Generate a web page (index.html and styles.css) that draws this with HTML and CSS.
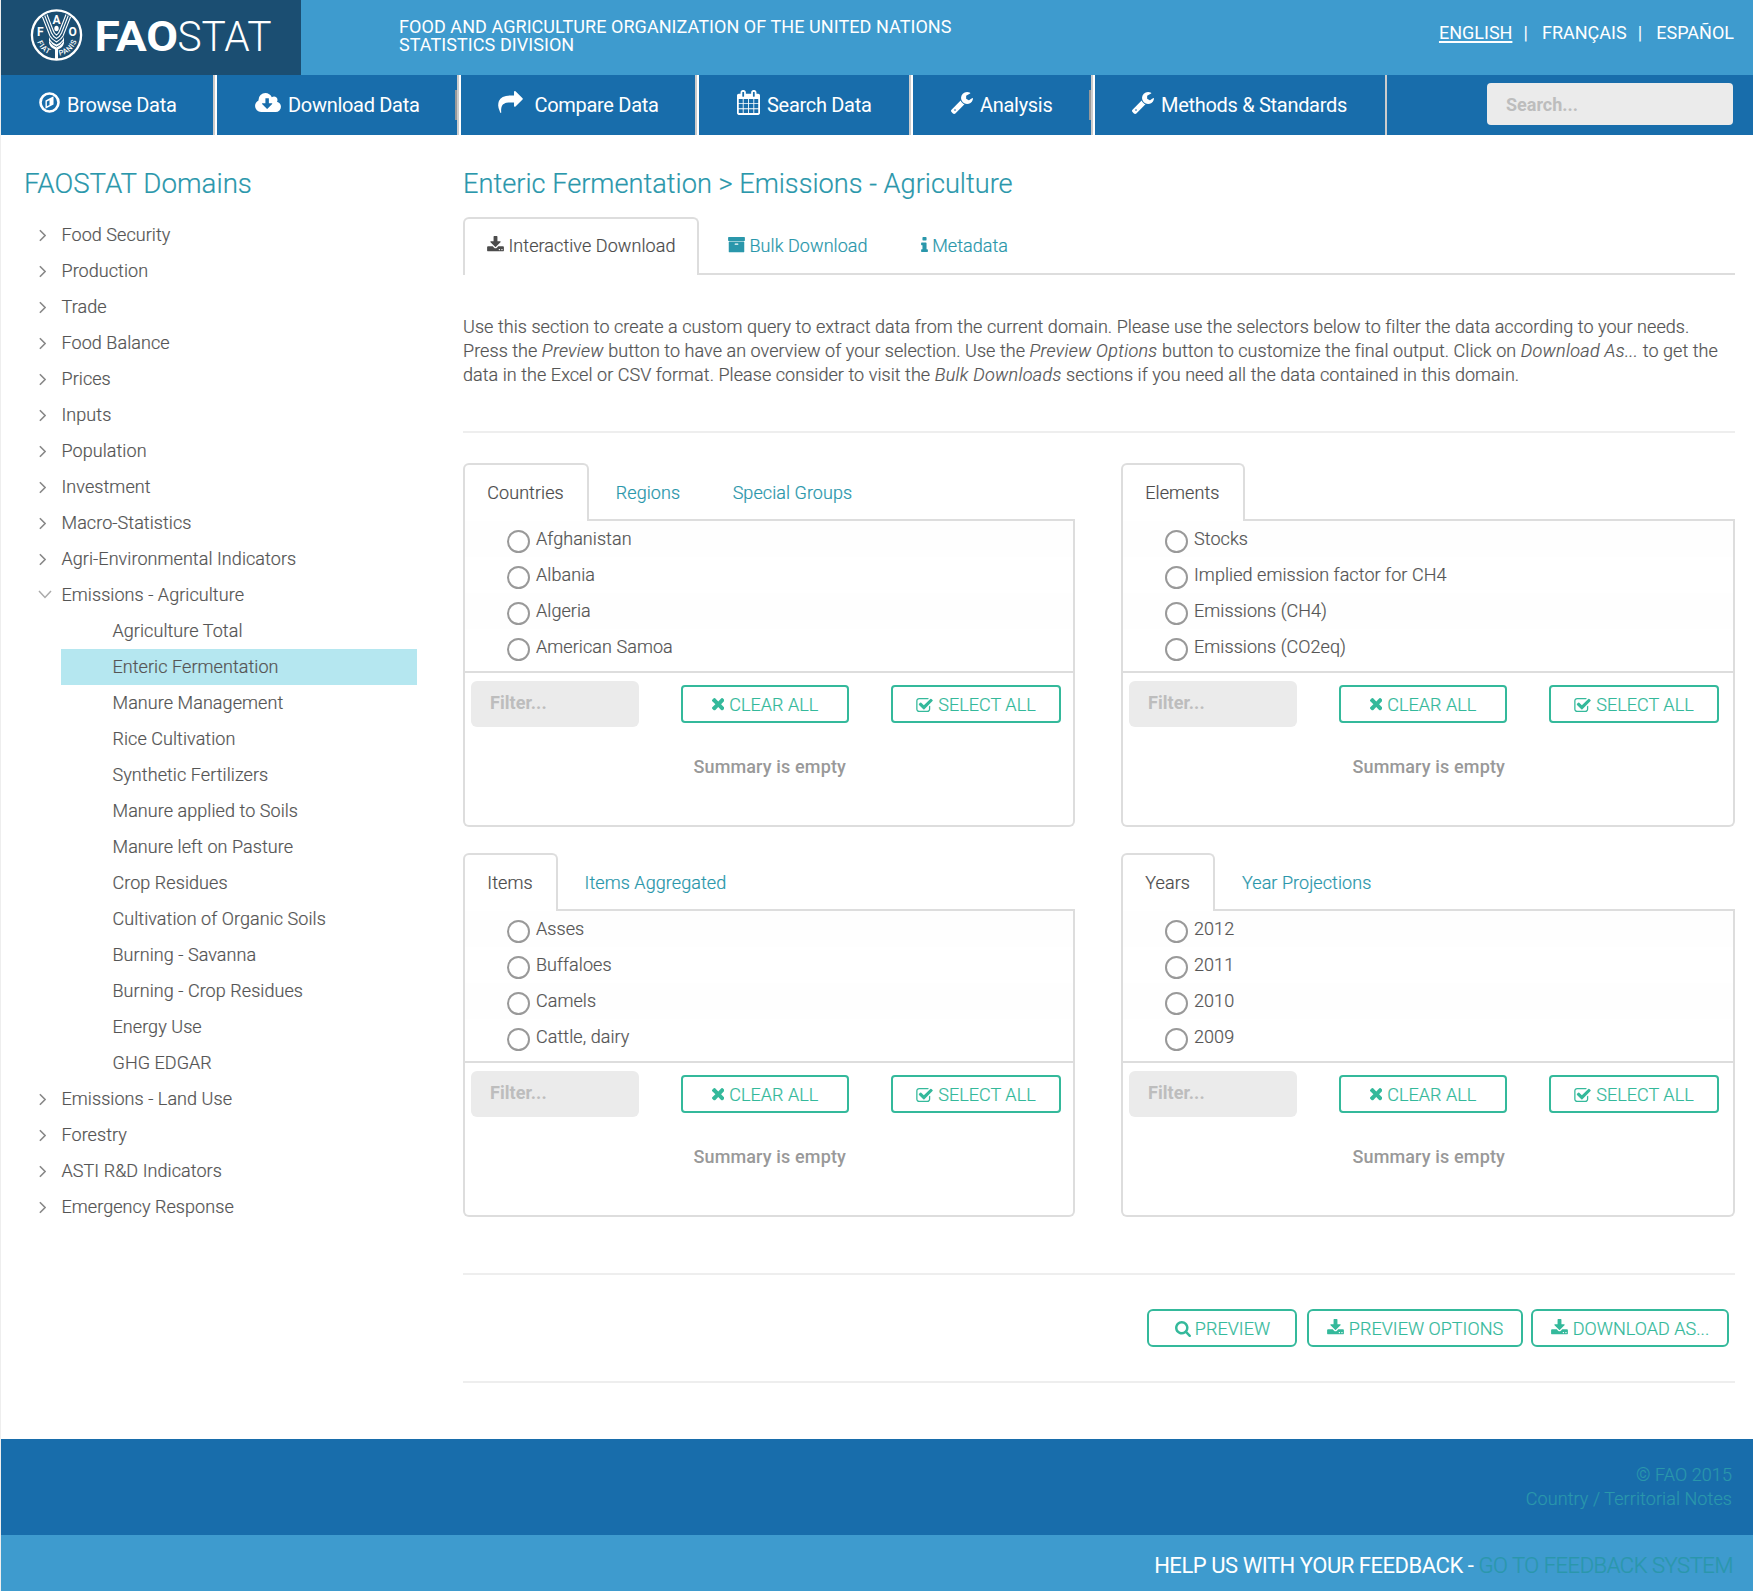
FILE: index.html
```html
<!DOCTYPE html>
<html lang="en">
<head>
<meta charset="utf-8">
<title>FAOSTAT</title>
<link rel="stylesheet" href="styles.css">
</head>
<body>
<svg class="sprite" aria-hidden="true">
  <symbol id="i-download" viewBox="64 0 1664 1536"><path d="M1344 1344q0-26-19-45t-45-19-45 19-19 45 19 45 45 19 45-19 19-45zm256 0q0-26-19-45t-45-19-45 19-19 45 19 45 45 19 45-19 19-45zm128-224v320q0 40-28 68t-68 28h-1472q-40 0-68-28t-28-68v-320q0-40 28-68t68-28h465l135 136q58 56 136 56t136-56l136-136h464q40 0 68 28t28 68zm-325-569q17 41-14 70l-448 448q-18 19-45 19t-45-19l-448-448q-31-29-14-70 17-39 59-39h256v-448q0-26 19-45t45-19h256q26 0 45 19t19 45v448h256q42 0 59 39z"/></symbol>
  <symbol id="i-search" viewBox="64 128 1664 1664"><path d="M1216 832q0-185-131.5-316.5t-316.5-131.5-316.5 131.5-131.5 316.5 131.5 316.5 316.5 131.5 316.5-131.5 131.5-316.5zm512 832q0 52-38 90t-90 38q-54 0-90-38l-343-342q-179 124-399 124-143 0-273.5-55.5t-225-150-150-225-55.5-273.5 55.5-273.5 150-225 225-150 273.5-55.5 273.5 55.5 225 150 150 225 55.5 273.5q0 220-124 399l343 343q37 37 37 90z"/></symbol>
  <symbol id="i-times" viewBox="302 366 1188 1188"><path d="M1490 1322q0 40-28 68l-136 136q-28 28-68 28t-68-28l-294-294-294 294q-28 28-68 28t-68-28l-136-136q-28-28-28-68t28-68l294-294-294-294q-28-28-28-68t28-68l136-136q28-28 68-28t68 28l294 294 294-294q28-28 68-28t68 28l136 136q28 28 28 68t-28 68l-294 294 294 294q28 28 28 68z"/></symbol>
  <symbol id="i-check" viewBox="64 128 1664 1408"><path d="M1472 930v318q0 119-84.5 203.5t-203.5 84.5h-832q-119 0-203.5-84.5t-84.5-203.5v-832q0-119 84.5-203.5t203.5-84.5h832q63 0 117 25 15 7 18 23 3 17-9 29l-49 49q-10 10-23 10-3 0-9-2-23-6-45-6h-832q-66 0-113 47t-47 113v832q0 66 47 113t113 47h832q66 0 113-47t47-113v-254q0-13 9-22l64-64q10-10 23-10 6 0 12 3 20 8 20 29zm231-489l-814 814q-24 24-57 24t-57-24l-430-430q-24-24-24-57t24-57l110-110q24-24 57-24t57 24l263 263 647-647q24-24 57-24t57 24l110 110q24 24 24 57t-24 57z"/></symbol>
  <symbol id="i-info" viewBox="576 128 640 1408"><path d="M1216 1344v128q0 26-19 45t-45 19h-512q-26 0-45-19t-19-45v-128q0-26 19-45t45-19h64v-384h-64q-26 0-45-19t-19-45v-128q0-26 19-45t45-19h384q26 0 45 19t19 45v576h64q26 0 45 19t19 45zm-128-1152v192q0 26-19 45t-45 19h-256q-26 0-45-19t-19-45v-192q0-26 19-45t45-19h256q26 0 45 19t19 45z"/></symbol>
  <symbol id="i-archive" viewBox="64 128 1664 1536"><path d="M1088 832q0-26-19-45t-45-19h-256q-26 0-45 19t-19 45 19 45 45 19h256q26 0 45-19t19-45zm576-192v960q0 26-19 45t-45 19h-1408q-26 0-45-19t-19-45v-960q0-26 19-45t45-19h1408q26 0 45 19t19 45zm64-448v256q0 26-19 45t-45 19h-1536q-26 0-45-19t-19-45v-256q0-26 19-45t45-19h1536q26 0 45 19t19 45z"/></symbol>
  <symbol id="i-wrench" viewBox="85 128 1642 1643"><path d="M448 1472q0-26-19-45t-45-19-45 19-19 45 19 45 45 19 45-19 19-45zm644-420l-682 682q-37 37-90 37-52 0-91-37l-106-108q-38-36-38-90 0-53 38-91l681-681q39 98 114.5 173.5t173.5 114.5zm634-435q0 39-23 106-47 134-164.5 217.5t-258.5 83.5q-185 0-316.5-131.5t-131.5-316.5 131.5-316.5 316.5-131.5q58 0 121.5 16.5t107.5 46.5q16 11 16 28t-16 28l-293 169v224l193 107q5-3 79-48.5t135.5-81 70.5-35.5q15 0 23.5 10t8.5 25z"/></symbol>
  <symbol id="i-calendar" viewBox="64 0 1664 1792"><path d="M192 1664h288v-288h-288v288zm352 0h320v-288h-320v288zm-352-352h288v-320h-288v320zm352 0h320v-320h-320v320zm-352-384h288v-288h-288v288zm736 736h320v-288h-320v288zm-384-736h320v-288h-320v288zm768 736h288v-288h-288v288zm-384-352h320v-320h-320v320zm-352-864v-288q0-13-9.500-22.500t-22.500-9.500h-64q-13 0-22.500 9.500t-9.500 22.500v288q0 13 9.500 22.500t22.500 9.500h64q13 0 22.500-9.500t9.500-22.500zm736 864h288v-320h-288v320zm-384-384h320v-288h-320v288zm384 0h288v-288h-288v288zm32-480v-288q0-13-9.500-22.500t-22.500-9.500h-64q-13 0-22.500 9.500t-9.500 22.500v288q0 13 9.500 22.500t22.500 9.500h64q13 0 22.500-9.500t9.500-22.500zm384-64v1280q0 52-38 90t-90 38h-1408q-52 0-90-38t-38-90v-1280q0-52 38-90t90-38h128v-96q0-66 47-113t113-47h64q66 0 113 47t47 113v96h384v-96q0-66 47-113t113-47h64q66 0 113 47t47 113v96h128q52 0 90 38t38 90z"/></symbol>
  <symbol id="i-share" viewBox="0 64 1792 1600"><path d="M1792 640q0 26-19 45l-512 512q-19 19-45 19t-45-19-19-45v-256h-224q-98 0-175.500 6t-154 21.500-133 42.500-105.500 69.500-80 101-48.500 138.500-17.500 181q0 55 5 123 0 6 2.500 23.500t2.500 26.500q0 15-8.500 25t-23.500 10q-16 0-28-17-7-9-13-22t-13.500-30-10.500-24q-127-285-127-451 0-199 53-333 162-403 875-403h224v-256q0-26 19-45t45-19 45 19l512 512q19 19 19 45z"/></symbol>
  <symbol id="i-cloud" viewBox="-64 128 1920 1408"><path d="M1216 928q0-14-9-23t-23-9h-224v-352q0-13-9.500-22.500t-22.500-9.500h-192q-13 0-22.500 9.500t-9.500 22.500v352h-224q-13 0-22.500 9.500t-9.500 22.500q0 14 9 23l352 352q9 9 23 9t23-9l351-351q10-12 10-24zm640 224q0 159-112.500 271.500t-271.500 112.500h-1088q-185 0-316.500-131.500t-131.500-316.500q0-130 70-240t188-165q-2-30-2-43 0-212 150-362t362-150q156 0 285.500 87t188.500 231q71-62 166-62 106 0 181 75t75 181q0 76-41 138 130 31 213.500 135.500t83.500 238.500z"/></symbol>
  <symbol id="i-compass" viewBox="0 0 24 24"><circle cx="12" cy="12" r="10.300" fill="none" stroke="currentColor" stroke-width="3"/><path fill-rule="evenodd" d="M7.400 9.800 16.600 4.900V14.200L7.400 19.100ZM9 10.900V16.400L12 14.800V9.300Z"/></symbol>
  <symbol id="i-right" viewBox="0 0 8 14"><path d="M1 1 7 7 1 13" fill="none" stroke="currentColor" stroke-width="1.900"/></symbol>
  <symbol id="i-down" viewBox="0 0 14 9"><path d="M1 1 7 7.500 13 1" fill="none" stroke="currentColor" stroke-width="1.500"/></symbol>
</svg>

<header class="top">
  <div class="brand">
    <svg class="logo" width="300" height="75" viewBox="1 0 300 75">
      <defs>
        <path id="arc-fiat" d="M36.200 38A20.800 20.800 0 0 0 55 55.800"/>
        <path id="arc-panis" d="M58.500 55.800A20.800 20.800 0 0 0 77.200 38"/>
      </defs>
      <circle cx="56.500" cy="35" r="24.600" fill="none" stroke="#fff" stroke-width="2.300"/>
      <g fill="none" stroke="#fff" stroke-width="1.100">
        <path d="M42.500 17 50 36Q51.500 39 56.500 42Q61.500 39 63 36L70.500 17"/>
        <path d="M44.700 15.500 51.500 33Q53 36.500 56.500 38.500Q60 36.500 61.500 33L68.300 15.500"/>
        <path d="M47 14.500 53 30Q54 33.500 56.500 35Q59 33.500 60 30L66 14.500"/>
      </g>
      <path d="M49 37Q51 42.500 56.500 44.500Q62 42.500 64 37V43Q63 47.500 58 49.500V60H55V49.500Q50 47.500 49 43Z" fill="#fff"/>
      <path d="M50 41.500Q52 45.500 56.500 47Q61 45.500 63 41.500" fill="none" stroke="#1b4e72" stroke-width=".8"/>
      <ellipse cx="56.500" cy="28.500" rx="2.200" ry="2.800" fill="#fff"/>
      <g class="seal-letters">
        <text x="40.300" y="36" text-anchor="middle">F</text>
        <text x="56.500" y="23.700" text-anchor="middle">A</text>
        <text x="72.700" y="36" text-anchor="middle">O</text>
      </g>
      <g class="seal-motto">
        <text><textPath href="#arc-fiat" startOffset="4">FIAT</textPath></text>
        <text><textPath href="#arc-panis" startOffset="1">PANIS</textPath></text>
      </g>
      <text class="word-bold" x="94.500" y="51" textLength="83.500" lengthAdjust="spacingAndGlyphs">FAO</text>
      <text class="word-thin" x="177.500" y="51" textLength="94" lengthAdjust="spacingAndGlyphs">STAT</text>
    </svg>
  </div>
  <p class="org">FOOD AND AGRICULTURE ORGANIZATION OF THE UNITED NATIONS<br>STATISTICS DIVISION</p>
  <div class="langs"><a class="current">ENGLISH</a><i>|</i><a>FRANÇAIS</a><i>|</i><a>ESPAÑOL</a></div>
</header>

<nav class="nav">
  <a class="n-browse"><svg><use href="#i-compass"/></svg><span>Browse Data</span></a>
  <a class="n-download tick"><svg><use href="#i-cloud"/></svg><span>Download Data</span></a>
  <a class="n-compare"><svg><use href="#i-share"/></svg><span>Compare Data</span></a>
  <a class="n-search"><svg><use href="#i-calendar"/></svg><span>Search Data</span></a>
  <a class="n-analysis tick"><svg><use href="#i-wrench"/></svg><span>Analysis</span></a>
  <a class="n-methods"><svg><use href="#i-wrench"/></svg><span>Methods &amp; Standards</span></a>
  <div class="search">Search...</div>
</nav>

<div class="page">
  <aside class="side">
    <h2>FAOSTAT Domains</h2>
    <ul class="tree">
      <li><svg><use href="#i-right"/></svg>Food Security</li>
      <li><svg><use href="#i-right"/></svg>Production</li>
      <li><svg><use href="#i-right"/></svg>Trade</li>
      <li><svg><use href="#i-right"/></svg>Food Balance</li>
      <li><svg><use href="#i-right"/></svg>Prices</li>
      <li><svg><use href="#i-right"/></svg>Inputs</li>
      <li><svg><use href="#i-right"/></svg>Population</li>
      <li><svg><use href="#i-right"/></svg>Investment</li>
      <li><svg><use href="#i-right"/></svg>Macro-Statistics</li>
      <li><svg><use href="#i-right"/></svg>Agri-Environmental Indicators</li>
      <li class="open"><svg><use href="#i-down"/></svg>Emissions - Agriculture</li>
      <li class="leaf">Agriculture Total</li>
      <li class="leaf selected">Enteric Fermentation</li>
      <li class="leaf">Manure Management</li>
      <li class="leaf">Rice Cultivation</li>
      <li class="leaf">Synthetic Fertilizers</li>
      <li class="leaf">Manure applied to Soils</li>
      <li class="leaf">Manure left on Pasture</li>
      <li class="leaf">Crop Residues</li>
      <li class="leaf">Cultivation of Organic Soils</li>
      <li class="leaf">Burning - Savanna</li>
      <li class="leaf">Burning - Crop Residues</li>
      <li class="leaf">Energy Use</li>
      <li class="leaf">GHG EDGAR</li>
      <li><svg><use href="#i-right"/></svg>Emissions - Land Use</li>
      <li><svg><use href="#i-right"/></svg>Forestry</li>
      <li><svg><use href="#i-right"/></svg>ASTI R&amp;D Indicators</li>
      <li><svg><use href="#i-right"/></svg>Emergency Response</li>
    </ul>
  </aside>

  <main class="main">
    <h2>Enteric Fermentation &gt; Emissions - Agriculture</h2>
    <div class="tabs tabs-main">
      <a class="active"><svg class="ic-dl"><use href="#i-download"/></svg>Interactive Download</a>
      <a><svg class="ic-ar"><use href="#i-archive"/></svg>Bulk Download</a>
      <a><svg class="ic-in"><use href="#i-info"/></svg>Metadata</a>
    </div>
    <p class="intro">Use this section to create a custom query to extract data from the current domain. Please use the selectors below to filter the data according to your needs.<br>Press the <em>Preview</em> button to have an overview of your selection. Use the <em>Preview Options</em> button to customize the final output. Click on <em>Download As...</em> to get the<br>data in the Excel or CSV format. Please consider to visit the <em>Bulk Downloads</em> sections if you need all the data contained in this domain.</p>
    <div class="rule"></div>

    <div class="panels">
      <section>
        <div class="tabs"><a class="active">Countries</a><a>Regions</a><a>Special Groups</a></div>
        <div class="box">
          <ul class="options"><li>Afghanistan</li><li>Albania</li><li>Algeria</li><li>American Samoa</li></ul>
          <div class="tools"><div class="filter">Filter...</div><button><svg class="ic-x"><use href="#i-times"/></svg>CLEAR ALL</button><button class="sel"><svg class="ic-ck"><use href="#i-check"/></svg>SELECT ALL</button></div>
          <p class="summary">Summary is empty</p>
        </div>
      </section>
      <section>
        <div class="tabs"><a class="active">Elements</a></div>
        <div class="box">
          <ul class="options"><li>Stocks</li><li>Implied emission factor for CH4</li><li>Emissions (CH4)</li><li>Emissions (CO2eq)</li></ul>
          <div class="tools"><div class="filter">Filter...</div><button><svg class="ic-x"><use href="#i-times"/></svg>CLEAR ALL</button><button class="sel"><svg class="ic-ck"><use href="#i-check"/></svg>SELECT ALL</button></div>
          <p class="summary">Summary is empty</p>
        </div>
      </section>
      <section>
        <div class="tabs"><a class="active">Items</a><a>Items Aggregated</a></div>
        <div class="box">
          <ul class="options"><li>Asses</li><li>Buffaloes</li><li>Camels</li><li>Cattle, dairy</li></ul>
          <div class="tools"><div class="filter">Filter...</div><button><svg class="ic-x"><use href="#i-times"/></svg>CLEAR ALL</button><button class="sel"><svg class="ic-ck"><use href="#i-check"/></svg>SELECT ALL</button></div>
          <p class="summary">Summary is empty</p>
        </div>
      </section>
      <section>
        <div class="tabs"><a class="active">Years</a><a>Year Projections</a></div>
        <div class="box">
          <ul class="options"><li>2012</li><li>2011</li><li>2010</li><li>2009</li></ul>
          <div class="tools"><div class="filter">Filter...</div><button><svg class="ic-x"><use href="#i-times"/></svg>CLEAR ALL</button><button class="sel"><svg class="ic-ck"><use href="#i-check"/></svg>SELECT ALL</button></div>
          <p class="summary">Summary is empty</p>
        </div>
      </section>
    </div>

    <div class="actions">
      <button class="b-preview"><svg class="ic-se"><use href="#i-search"/></svg>PREVIEW</button>
      <button class="b-options"><svg class="ic-dl"><use href="#i-download"/></svg>PREVIEW OPTIONS</button>
      <button class="b-download"><svg class="ic-dl"><use href="#i-download"/></svg>DOWNLOAD AS...</button>
    </div>
  </main>
</div>

<footer>
  <div class="legal">© FAO 2015<br>Country / Territorial Notes</div>
  <div class="feedback">HELP US WITH YOUR FEEDBACK - <a>GO TO FEEDBACK SYSTEM</a></div>
</footer>
</body>
</html>
```
FILE: styles.css
```css
*, *::before, *::after { box-sizing: border-box; }
html { background: #fff; }
body {
  margin: 0;
  width: 1753px;
  border-left: 1px solid #eee;
  font: 300 18px/24px Roboto, sans-serif;
  letter-spacing: .065px;
  color: #555;
}
ul, p, h2 { margin: 0; padding: 0; list-style: none; }
svg { fill: currentColor; flex: none; display: block; }
.sprite { position: absolute; width: 0; height: 0; }

.top { display: flex; height: 75px; background: #3e9bce; color: #fff; }
.brand { width: 300px; background: #1b4e72; }
.logo text { fill: #fff; }
.seal-letters { font: 700 12px Roboto, sans-serif; }
.seal-motto { font: 500 7.5px Roboto, sans-serif; letter-spacing: .6px; }
.word-bold { font: 700 43px Roboto, sans-serif; letter-spacing: 0; }
.word-thin { font: 300 43px Roboto, sans-serif; letter-spacing: 0; }
.org { margin-left: 98px; padding-top: 18px; font-weight: 400; line-height: 18px; letter-spacing: .065px; }
.langs { margin: 21px 19px 0 auto; display: flex; font-weight: 400; letter-spacing: 0; }
.langs i { font-style: normal; margin: 0 14.200px 0 11px; }
.langs .current { text-decoration: underline; text-decoration-thickness: 2px; text-underline-offset: 2px; }

.nav { display: flex; height: 60px; background: #186dab; color: #fff; font-size: 20px; font-weight: 400; letter-spacing: -.3px; }
.nav a { display: flex; align-items: center; position: relative; border-right: 2px solid #fff; box-shadow: inset -2px 0 #ccc; }
.nav span { padding: 0 0 1px .500px; white-space: nowrap; }
.nav .tick::after { content: ""; position: absolute; right: 2px; top: 15px; width: 2px; height: 30px; background: #999; }
.n-browse { width: 216px; padding-left: 38px; }
.n-browse svg { width: 21px; height: 21px; margin: -5px 6.500px 0 0; }
.n-download { width: 244px; padding-left: 38px; }
.n-download svg { width: 26px; height: 19px; margin: -6px 6.500px 0 0; }
.n-compare { width: 238px; padding-left: 37px; }
.n-compare svg { width: 25px; height: 22px; margin: -7px 11px 0 0; }
.n-search { width: 214px; padding-left: 38px; }
.n-search svg { width: 23px; height: 25px; margin: -5px 6.500px 0 0; }
.n-analysis { width: 182px; padding-left: 38px; }
.n-analysis svg, .n-methods svg { width: 22px; height: 22px; margin: -4px 6.500px 0 0; }
.nav .n-methods { width: 292px; padding-left: 37px; border-right: 2px solid #ccc; box-shadow: none; }
.search {
  width: 246px; height: 42px; margin: 8px 20px 0 auto; padding-left: 19px;
  border-radius: 4px; background: #ebebeb; color: #bdbdbd;
  font-size: 18px; font-weight: 700; line-height: 43px; letter-spacing: 0;
}

.page { display: flex; height: 1304px; padding-top: 30px; -webkit-text-stroke: .2px; }
h2 { font-size: 27.200px; line-height: 38px; font-weight: 300; letter-spacing: 0; color: #2a97ab; }
.side { width: 462px; }
.side h2 { padding-left: 23px; font-size: 27.700px; }
.tree { margin-top: 14px; padding-left: 60px; }
.tree li { display: flex; align-items: center; height: 36px; width: 356px; padding-left: .5px; }
.tree svg { width: 7px; height: 13px; margin: 1px 15.500px 0 -22.500px; color: #888; }
.tree .open svg { width: 14px; height: 9px; margin: -1px 9.500px 0 -23.500px; color: #aaa; }
.tree .leaf { padding-left: 51.500px; }
.tree .selected { background: #b5e7f0; }

.main { width: 1272px; }
.tabs { display: flex; height: 58px; border-bottom: 2px solid #ddd; line-height: 56px; color: #2a97ab; }
.tabs a { display: flex; padding: 2px 26px 0 26.500px; white-space: nowrap; }
.tabs .active {
  height: 58px; padding: 0 23.500px 0 22.300px; color: #4c4c4c; background: #fff;
  border: 2px solid #ddd; border-bottom: 0; border-radius: 6px 6px 0 0;
}
.tabs-main { margin-top: 14px; line-height: 54px; }
.tabs-main a { padding: 2px 24px 0 29px; }
.tabs-main .active { padding: 0 21.500px 0 22px; }
.tabs svg { margin-right: 4.500px; }
.ic-dl { width: 17px; height: 15.500px; margin-top: 17px; }
.ic-ar { width: 17px; height: 15.500px; margin-top: 18px; }
.ic-in { width: 7px; height: 15px; margin-top: 18px; }
.intro { margin-top: 40px; white-space: nowrap; letter-spacing: .055px; }
.intro em { letter-spacing: .3px; }
.rule { margin-top: 44px; height: 2px; background: #eee; }

.panels { display: grid; grid-template-columns: 612px 614px; gap: 26px 46px; margin-top: 30px; }
.box { height: 306px; border: 2px solid #ddd; border-top: 0; border-radius: 0 0 6px 6px; }
.options { height: 152px; border-bottom: 2px solid #ddd; }
.options li { display: flex; align-items: center; height: 36px; padding-left: 42px; }
.options li:nth-child(odd) { background: #fefefe; }
.options li::before {
  content: ""; width: 23px; height: 23px; margin: 4px 6px 0 0;
  border: 2px solid #999; border-radius: 50%; background: #fff;
}
.tools { display: flex; align-items: center; padding: 8px 0 0 6px; }
.filter {
  width: 168px; height: 46px; padding-left: 19px; border-radius: 6px; -webkit-text-stroke: 0;
  background: #ebebeb; color: #bdbdbd; font-weight: 700; line-height: 44px;
}
button {
  display: flex; align-items: center; justify-content: center;
  width: 168px; height: 38px; margin: 0 0 0 42px; padding: 1px 0 0;
  border: 2px solid #34b99b; border-radius: 4px; background: #fff; color: #34b99b;
  font: inherit; letter-spacing: .03px; white-space: nowrap; -webkit-text-stroke: .2px;
}
button.sel { width: 170px; }
button svg { margin: 0 5px 0 0; }
.ic-x { width: 12.500px; height: 12.500px; }
.ic-ck { width: 17px; height: 14px; }
.ic-se { width: 16px; height: 16px; }
.summary { margin-top: 28px; padding-left: 1.500px; text-align: center; color: #999; font-weight: 500; letter-spacing: .14px; -webkit-text-stroke: 0; }

.actions {
  display: flex; height: 110px; margin-top: 56px; padding: 34px 6px 0 0; justify-content: flex-end;
  border: solid #eee; border-width: 2px 0;
}
.actions button { margin: 0; border-radius: 6px; }
.actions .b-preview { width: 150px; margin-right: 10px; }
.actions .b-options { width: 216px; margin-right: 8px; }
.actions .b-download { width: 198px; }
.actions svg { margin-top: -3px; }
.actions .ic-se { margin: 1px 4px 0 1px; }

.legal { height: 96px; padding: 24px 21px 0 0; background: #186dab; color: #2a97ab; text-align: right; letter-spacing: .08px; -webkit-text-stroke: .2px; }
.feedback { height: 56px; padding-right: 20px; background: #3e9bce; color: #fff; text-align: right; font-size: 22px; font-weight: 400; line-height: 62px; letter-spacing: -.46px; overflow: hidden; }
.feedback a { color: #2a97ab; font-weight: 300; -webkit-text-stroke: .2px; }
```
